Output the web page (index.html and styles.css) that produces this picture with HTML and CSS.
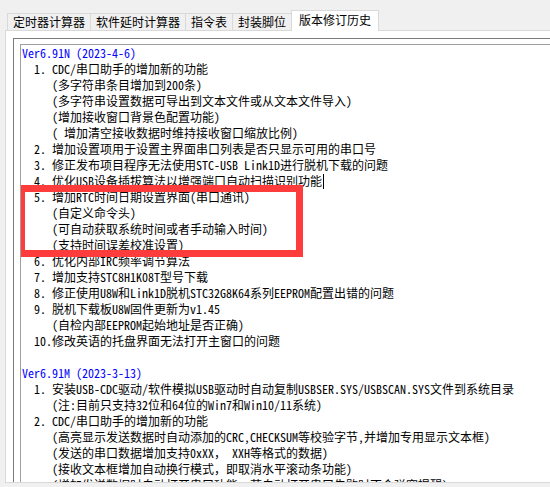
FILE: index.html
```html
<!DOCTYPE html>
<html lang="zh-CN">
<head>
    <meta charset="UTF-8">
    <title>版本修订历史</title>
    <link rel="stylesheet" href="styles.css">
</head>
<body>
    <div class="tabs">
        <div class="tab">定时器计算器</div>
        <div class="tab">软件延时计算器</div>
        <div class="tab">指令表</div>
        <div class="tab">封装脚位</div>
        <div class="tab active">版本修订历史</div>
    </div>
    <div class="page">
        <div class="memo">
            <div class="memo-text">
                <div class="ln ver">Ver6.91N (2023-4-6)</div>
                <div class="ln item"><span class="no">1.</span>CDC/串口助手的增加新的功能</div>
                <div class="ln sub">(多字符串条目增加到200条)</div>
                <div class="ln sub">(多字符串设置数据可导出到文本文件或从文本文件导入)</div>
                <div class="ln sub">(增加接收窗口背景色配置功能)</div>
                <div class="ln sub">( 增加清空接收数据时维持接收窗口缩放比例)</div>
                <div class="ln item"><span class="no">2.</span>增加设置项用于设置主界面串口列表是否只显示可用的串口号</div>
                <div class="ln item"><span class="no">3.</span>修正发布项目程序无法使用STC-USB Link1D进行脱机下载的问题</div>
                <div class="ln item"><span class="no">4.</span>优化USB设备插拔算法以增强端口自动扫描识别功能<span class="caret"></span></div>
                <div class="ln item"><span class="no">5.</span>增加RTC时间日期设置界面(串口通讯)</div>
                <div class="ln sub">(自定义命令头)</div>
                <div class="ln sub">(可自动获取系统时间或者手动输入时间)</div>
                <div class="ln sub">(支持时间误差校准设置)</div>
                <div class="ln item"><span class="no">6.</span>优化内部IRC频率调节算法</div>
                <div class="ln item"><span class="no">7.</span>增加支持STC8H1K08T型号下载</div>
                <div class="ln item"><span class="no">8.</span>修正使用U8W和Link1D脱机STC32G8K64系列EEPROM配置出错的问题</div>
                <div class="ln item"><span class="no">9.</span>脱机下载板U8W固件更新为v1.45</div>
                <div class="ln sub">(自检内部EEPROM起始地址是否正确)</div>
                <div class="ln item"><span class="no">10.</span>修改英语的托盘界面无法打开主窗口的问题</div>
                <div class="ln"></div>
                <div class="ln ver">Ver6.91M (2023-3-13)</div>
                <div class="ln item"><span class="no">1.</span>安装USB-CDC驱动/软件模拟USB驱动时自动复制USBSER.SYS/USBSCAN.SYS文件到系统目录</div>
                <div class="ln sub">(注:目前只支持32位和64位的Win7和Win10/11系统)</div>
                <div class="ln item"><span class="no">2.</span>CDC/串口助手的增加新的功能</div>
                <div class="ln sub">(高亮显示发送数据时自动添加的CRC,CHECKSUM等校验字节,并增加专用显示文本框)</div>
                <div class="ln sub">(发送的串口数据增加支持0xXX， XXH等格式的数据)</div>
                <div class="ln sub">(接收文本框增加自动换行模式，即取消水平滚动条功能)</div>
                <div class="ln sub">(增加发送数据时自动打开串口功能，若自动打开串口失败时不会弹窗提醒)</div>

                <div class="mark"></div>
            </div>
        </div>
    </div>
</body>
</html>
```

FILE: styles.css
```css
* {
    margin: 0;
    padding: 0;
    box-sizing: border-box;
}

body {
    width: 550px;
    height: 487px;
    overflow: hidden;
    background-color: #f0f0f0;
    color: #000;
    font-family: "Noto Sans CJK SC", sans-serif;
    font-size: 12px;
}

/* Tab strip */
.tabs {
    display: flex;
    align-items: flex-end;
    height: 30px;
    padding-left: 7px;
}

.tab {
    height: 17px;
    padding: 0 5px;
    margin-left: -1px;
    border: 1px solid #d9d9d9;
    border-bottom: 0;
    background-color: #f0f0f0;
    line-height: 16px;
    white-space: nowrap;
}

.tab:first-child {
    margin-left: 0;
}

.tab.active {
    height: 21px;
    padding: 1px 7px 3px;
    margin-bottom: -1px;
    background-color: #fff;
    position: relative;
    z-index: 1;
}

/* Tab page */
.page {
    height: 453px;
    margin: 0 -30px 0 5px;
    padding: 7px 0 0 7px;
    border: 1px solid #d9d9d9;
    background-color: #fff;
}

.memo {
    height: 100%;
    padding: 5px 0 0 6px;
    border-top: 1px solid #7a7a7a;
    border-left: 1px solid #7a7a7a;
}

.memo-text {
    position: relative;
    height: 100%;
    padding-left: 1px;
    border-top: 1px solid #a0a0a0;
    border-left: 1px solid #a0a0a0;
    background-color: #fff;
    font-family: "Noto Sans Mono CJK SC", "Noto Sans CJK SC", monospace;
    font-size: 12px;
    line-height: 16px;
    white-space: nowrap;
    overflow: hidden;
}

.ln {
    height: 16px;
}

.ver {
    color: #0000ff;
}

.item {
    padding-left: 12px;
}

.sub {
    padding-left: 30px;
}

.no {
    display: inline-block;
    width: 18px;
}

.caret {
    display: inline-block;
    width: 1px;
    height: 15px;
    margin-left: 1px;
    background-color: #000;
    vertical-align: -3px;
}

/* red annotation box */
.mark {
    position: absolute;
    left: -3px;
    top: 140px;
    width: 285px;
    height: 72px;
    border: 7px solid #ff3c3c;
}
```
